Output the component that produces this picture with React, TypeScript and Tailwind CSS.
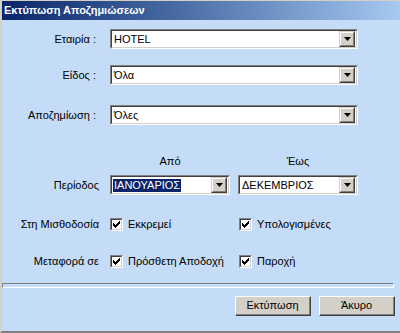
import type { ReactNode } from 'react'

const font = { fontFamily: '"Liberation Sans", Arial, sans-serif' }

function Arrow() {
  return (
    <svg width="7" height="4" viewBox="0 0 7 4" className="block">
      <path d="M0 0h7L3.5 4z" fill="#000" />
    </svg>
  )
}

function Combo({
  value,
  width,
  selected = false,
}: {
  value: string
  width: string
  selected?: boolean
}) {
  return (
    <div
      className={`${width} h-[20px] border-t border-l border-t-[#808080] border-l-[#808080] border-b border-r border-b-white border-r-white`}
    >
      <div className="flex h-full items-center border-t border-l border-t-[#404040] border-l-[#404040] border-b border-r border-b-[#d4d0c8] border-r-[#d4d0c8] bg-white">
        <div className="flex h-full flex-1 items-center pl-px">
          <span
            className={
              selected
                ? 'bg-[#0a246a] px-px text-[11px] leading-[13px] text-white'
                : 'px-px text-[11px] leading-[13px] text-black'
            }
          >
            {value}
          </span>
        </div>
        <div className="mr-px flex h-[16px] w-[16px] items-center justify-center border-t border-l border-t-[#d4d0c8] border-l-[#d4d0c8] border-b border-r border-b-[#404040] border-r-[#404040] bg-[#d4d0c8]">
          <div className="flex h-full w-full items-center justify-center border-t border-l border-t-white border-l-white border-b border-r border-b-[#808080] border-r-[#808080]">
            <Arrow />
          </div>
        </div>
      </div>
    </div>
  )
}

function Check({ label }: { label: string }) {
  return (
    <div className="flex items-center">
      <div className="h-[13px] w-[13px] border-t border-l border-t-[#808080] border-l-[#808080] border-b border-r border-b-white border-r-white">
        <div className="flex h-full w-full items-center justify-center border-t border-l border-t-[#404040] border-l-[#404040] border-b border-r border-b-[#d4d0c8] border-r-[#d4d0c8] bg-white">
          <svg width="7" height="7" viewBox="0 0 7 7" className="block">
            <path d="M0 2h1v1h1v1h1V3h1V2h1V1h1V0h1v3H6v1H5v1H4v1H3v1H2V6H1V5H0z" fill="#000" />
          </svg>
        </div>
      </div>
      <span className="ml-[5px] text-[11px] leading-[13px] text-black">{label}</span>
    </div>
  )
}

function Label({ children }: { children: ReactNode }) {
  return (
    <div className="w-[97px] shrink-0 text-right text-[11px] leading-[13px] text-black">
      {children}
    </div>
  )
}

function Button({ children }: { children: ReactNode }) {
  return (
    <div className="h-[20px] w-[76px] border-t border-l border-t-white border-l-white border-b border-r border-b-[#404040] border-r-[#404040] bg-[#d4d0c8]">
      <div className="flex h-full w-full items-center justify-center border-b border-r border-b-[#808080] border-r-[#808080] text-[11px] leading-[13px] text-black">
        {children}
      </div>
    </div>
  )
}

export default function App() {
  return (
    <div
      className="flex h-[333px] w-[400px] flex-col overflow-hidden border-l-2 border-l-[#d4d0c8] border-b-2 border-b-[#808080] bg-[#c4dcf8]"
      style={font}
    >
      <div className="-ml-[2px] flex h-[20px] shrink-0 items-center border-t border-t-[#d4d0c8] bg-gradient-to-r from-[#0a246a] to-[#a6caf0] pl-[4px]">
        <span className="text-[11px] font-bold leading-[13px] text-white">
          Εκτύπωση Αποζημιώσεων
        </span>
      </div>

      <div className="mt-[9px] flex items-center">
        <Label>Εταιρία :&nbsp;</Label>
        <div className="ml-[11px]">
          <Combo value="HOTEL" width="w-[248px]" />
        </div>
      </div>

      <div className="mt-[16px] flex items-center">
        <Label>Είδος :&nbsp;</Label>
        <div className="ml-[11px]">
          <Combo value="Όλα" width="w-[248px]" />
        </div>
      </div>

      <div className="mt-[20px] flex items-center">
        <Label>Αποζημίωση :&nbsp;</Label>
        <div className="ml-[11px]">
          <Combo value="Όλες" width="w-[248px]" />
        </div>
      </div>

      <div className="mt-[30px] flex pl-[108px] text-[11px] leading-[13px] text-black">
        <div className="w-[120px] text-center">Από</div>
        <div className="ml-[8px] w-[120px] text-center">Έως</div>
      </div>

      <div className="mt-[7px] flex items-center">
        <Label>Περίοδος</Label>
        <div className="ml-[11px] flex gap-[8px]">
          <Combo value="ΙΑΝΟΥΑΡΙΟΣ" width="w-[120px]" selected />
          <Combo value="ΔΕΚΕΜΒΡΙΟΣ" width="w-[120px]" />
        </div>
      </div>

      <div className="mt-[23px] flex items-center">
        <Label>Στη Μισθοδοσία</Label>
        <div className="ml-[11px] w-[129px]">
          <Check label="Εκκρεμεί" />
        </div>
        <Check label="Υπολογισμένες" />
      </div>

      <div className="mt-[24px] flex items-center">
        <Label>Μεταφορά σε</Label>
        <div className="ml-[11px] w-[129px]">
          <Check label="Πρόσθετη Αποδοχή" />
        </div>
        <Check label="Παροχή" />
      </div>

      <div className="mt-[15px] h-[5px] w-[392px] border-t border-l border-t-[#808080] border-l-[#808080] border-b border-r border-b-white border-r-white" />

      <div className="mt-[8px] flex justify-end gap-[8px] pr-[5px]">
        <Button>Εκτύπωση</Button>
        <Button>Άκυρο</Button>
      </div>
    </div>
  )
}
